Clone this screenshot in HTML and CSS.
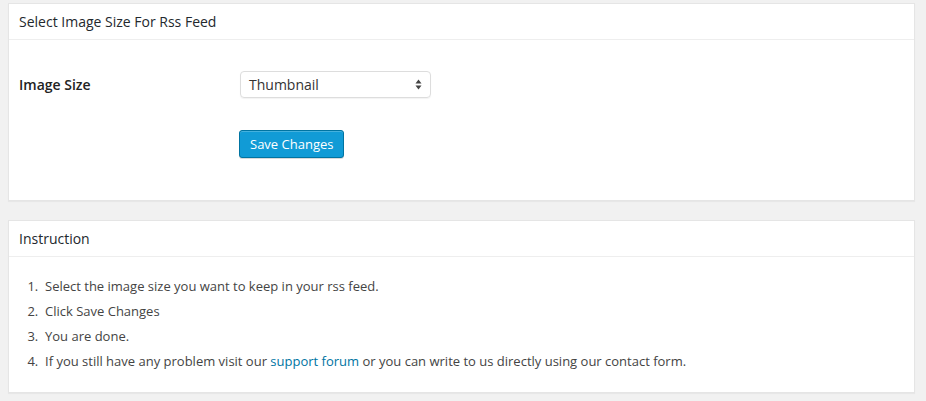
FILE: index.html
```html
<!DOCTYPE html>
<html lang="en">
<head>
<meta charset="utf-8">
<title>Rss Feed Image Size</title>
<link rel="stylesheet" href="styles.css">
</head>
<body>
<div class="wrap">
  <div class="postbox">
    <h3 class="hndle">Select Image Size For Rss Feed</h3>
    <div class="inside settings">
      <div class="form-row">
        <label class="label">Image Size</label>
        <div class="select">
          <span>Thumbnail</span>
          <svg class="arrows" width="7" height="11" viewBox="0 0 7 11"><path d="M3.5 0.5 L6.5 4.5 L0.5 4.5 Z M0.5 6.5 L6.5 6.5 L3.5 10.5 Z" fill="#444"/></svg>
        </div>
      </div>
      <div class="submit-row">
        <button class="button-primary" type="button">Save Changes</button>
      </div>
    </div>
  </div>
  <div class="postbox">
    <h3 class="hndle">Instruction</h3>
    <div class="inside">
      <ol class="steps">
        <li>Select the image size you want to keep in your rss feed.</li>
        <li>Click Save Changes</li>
        <li>You are done.</li>
        <li>If you still have any problem visit our <a href="#">support forum</a> or you can write to us directly using our contact form.</li>
      </ol>
    </div>
  </div>
</div>
</body>
</html>
```

FILE: styles.css
```css
html, body {
  margin: 0;
  padding: 0;
  background: #f1f1f1;
}
body {
  font-family: "Open Sans", "Noto Sans", sans-serif;
  font-size: 13px;
  color: #444;
}
.wrap {
  padding: 3px 11px 0 8px;
}
.postbox {
  background: #fff;
  border: 1px solid #e5e5e5;
  box-shadow: 0 1px 1px rgba(0, 0, 0, 0.04);
  margin-bottom: 19px;
}
.hndle {
  margin: 0;
  padding: 8px 10px;
  font-size: 14px;
  font-weight: 400;
  line-height: 19px;
  color: #23282d;
  border-bottom: 1px solid #eee;
}
.settings {
  padding: 16px 10px 42px;
}
.form-row {
  display: grid;
  grid-template-columns: 221px 191px;
  align-items: center;
  padding: 15px 0;
}
.label {
  font-size: 14px;
  font-weight: 600;
  color: #222;
}
.select {
  box-sizing: border-box;
  height: 27px;
  border: 1px solid #ddd;
  border-radius: 4px;
  box-shadow: 0 1px 1px rgba(0, 0, 0, 0.05);
  display: flex;
  align-items: center;
  justify-content: space-between;
  padding: 0 8px 0 8px;
  font-size: 14px;
  color: #333;
}
.arrows {
  display: block;
}
.submit-row {
  padding: 17px 0 0 220px;
}
.button-primary {
  box-sizing: border-box;
  height: 28px;
  padding: 0 10px 1px;
  font-family: inherit;
  font-size: 13px;
  line-height: 26px;
  color: #fff;
  background: #119bd6;
  border: 1px solid #0074a2;
  border-radius: 3px;
  box-shadow: inset 0 1px 0 rgba(120, 200, 230, 0.5), 0 1px 0 rgba(0, 0, 0, 0.15);
  cursor: pointer;
}
.steps {
  margin: 0;
  padding: 20px 10px 15px 36px;
}
.steps li {
  line-height: 19px;
  margin-bottom: 6px;
}
.steps li::marker {
  content: counter(list-item) ".\00a0\00a0";
}
.steps a {
  color: #0074a2;
  text-decoration: none;
}
```
